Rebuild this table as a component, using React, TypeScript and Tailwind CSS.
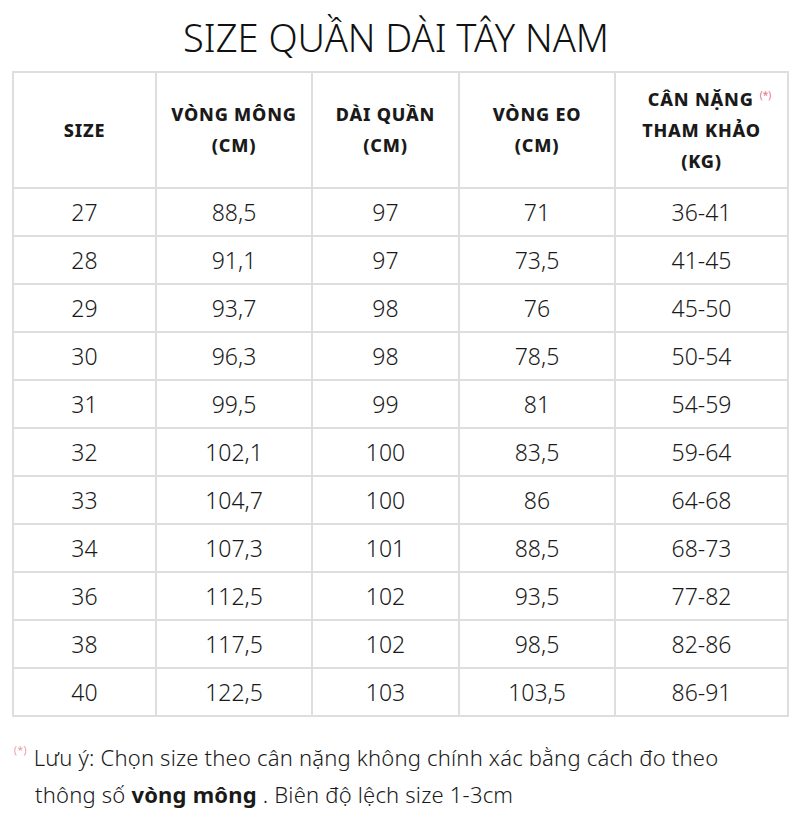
import React from "react";

const rows: string[][] = [
  ["27", "88,5", "97", "71", "36-41"],
  ["28", "91,1", "97", "73,5", "41-45"],
  ["29", "93,7", "98", "76", "45-50"],
  ["30", "96,3", "98", "78,5", "50-54"],
  ["31", "99,5", "99", "81", "54-59"],
  ["32", "102,1", "100", "83,5", "59-64"],
  ["33", "104,7", "100", "86", "64-68"],
  ["34", "107,3", "101", "88,5", "68-73"],
  ["36", "112,5", "102", "93,5", "77-82"],
  ["38", "117,5", "102", "98,5", "82-86"],
  ["40", "122,5", "103", "103,5", "86-91"],
];

export default function App() {
  return (
    <div className="w-[801px] h-[817px] bg-white text-[#1a1a1a] font-['Noto_Sans','Liberation_Sans',sans-serif]">
      <h1 className="pt-[14px] pr-[9px] h-[71px] text-center text-[38px] leading-[46px] font-light text-[#111]">
        SIZE QUẦN DÀI TÂY NAM
      </h1>
      <table className="ml-[12px] w-[775px] border-collapse table-fixed">
        <colgroup>
          <col className="w-[143px]" />
          <col className="w-[156px]" />
          <col className="w-[147px]" />
          <col className="w-[156px]" />
          <col className="w-[173px]" />
        </colgroup>
        <thead>
          <tr className="h-[116px]">
            <th className="border-2 border-[#dedede] text-[18px] leading-[31px] font-extrabold tracking-[0.8px] text-center">SIZE</th>
            <th className="border-2 border-[#dedede] text-[18px] leading-[31px] font-extrabold tracking-[0.8px] text-center">
              VÒNG MÔNG<br />(CM)
            </th>
            <th className="border-2 border-[#dedede] text-[18px] leading-[31px] font-extrabold tracking-[0.8px] text-center">
              DÀI QUẦN<br />(CM)
            </th>
            <th className="border-2 border-[#dedede] text-[18px] leading-[31px] font-extrabold tracking-[0.8px] text-center">
              VÒNG EO<br />(CM)
            </th>
            <th className="border-2 border-[#dedede] text-[18px] leading-[31px] font-extrabold tracking-[0.8px] text-center">
              <span className="pl-[16px]">CÂN NẶNG</span>
              <span className="ml-[6px] text-[10px] font-normal tracking-normal text-[#e8707e] align-top relative top-[-4px]">(*)</span>
              <br />THAM KHẢO<br />(KG)
            </th>
          </tr>
        </thead>
        <tbody>
          {rows.map((r) => (
            <tr key={r[0]} className="h-[48px]">
              {r.map((c, i) => (
                <td key={i} className="border-2 border-[#dedede] text-center text-[23px] font-light leading-none">
                  {c}
                </td>
              ))}
            </tr>
          ))}
        </tbody>
      </table>
      <div className="mt-[22px] pl-[14px] text-[22px] leading-[37px] font-light tracking-[0.2px] text-[#1a1a1a]">
        <div className="flex">
          <span className="text-[11px] text-[#e8707e] leading-none mt-[5px] mr-[7px]">(*)</span>
          <span>Lưu ý: Chọn size theo cân nặng không chính xác bằng cách đo theo</span>
        </div>
        <div className="pl-[21px]">
          thông số <b className="font-bold">vòng mông</b> . Biên độ lệch size 1-3cm
        </div>
      </div>
    </div>
  );
}
